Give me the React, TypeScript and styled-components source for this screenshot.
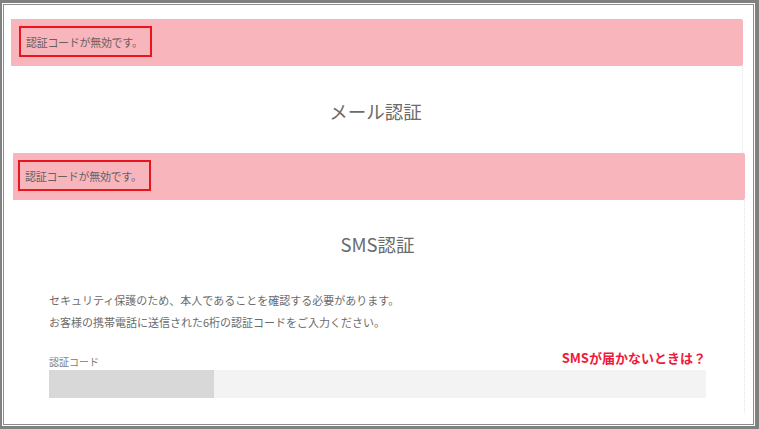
import React from "react";
import styled, { createGlobalStyle } from "styled-components";

const Global = createGlobalStyle`
  html, body { margin: 0; padding: 0; background: #ffffff; }
  body { font-family: "Noto Sans CJK JP", "Noto Sans", sans-serif; }
  * { box-sizing: border-box; }
`;

const Frame = styled.div`
  width: 759px;
  height: 429px;
  background: #ffffff;
  border-style: solid;
  border-color: #808080;
  border-width: 3px 4px 3px 2px;
  padding: 1px;
`;

const Inner = styled.div`
  height: 100%;
  border: 1px solid #8c8c8c;
  overflow: hidden;
  display: flex;
  flex-direction: column;
`;

const Section = styled.section<{ $left: number; $top: number }>`
  width: 732px;
  margin-left: ${(p) => p.$left}px;
  margin-top: ${(p) => p.$top}px;
  display: flex;
  flex-direction: column;
`;

const Banner = styled.div<{ $inset: number }>`
  height: 47px;
  background: #f8b6bc;
  border-radius: 0 2px 2px 0;
  padding: 7px 0 9px ${(p) => p.$inset}px;
  display: flex;
  align-items: stretch;
`;

const Marked = styled.div`
  width: 133px;
  border: 2px solid #e8141e;
  padding-left: 5px;
  display: flex;
  align-items: center;
  font-size: 11px;
  letter-spacing: -0.3px;
  color: #6a5f61;
  white-space: nowrap;
`;

const Panel = styled.div<{ $height: number; $padTop: number }>`
  height: ${(p) => p.$height}px;
  padding: ${(p) => p.$padTop}px 38px 0 36px;
  border-right: 1px dotted #e4e4e4;
  display: flex;
  flex-direction: column;
`;

const Title = styled.h2`
  margin: 0;
  text-align: center;
  font-size: 18.5px;
  line-height: 24px;
  font-weight: 400;
  color: #6b6b6b;
`;

const Lead = styled.p`
  margin: 33px 0 0;
  font-size: 11px;
  line-height: 22px;
  color: #6b6b6b;
  white-space: nowrap;
`;

const FieldHead = styled.div`
  margin-top: 16px;
  display: flex;
  justify-content: space-between;
  align-items: flex-end;
`;

const Label = styled.label`
  font-size: 10px;
  line-height: 14px;
  color: #7a7a7a;
`;

const HelpLink = styled.a`
  margin-bottom: 2px;
  font-size: 13px;
  line-height: 18px;
  font-weight: 700;
  color: #f0193a;
  text-decoration: none;
`;

const CodeInput = styled.div`
  margin-top: 1px;
  height: 28px;
  background: #f3f3f3;
  display: flex;
`;

const Filled = styled.div`
  width: 165px;
  background: #d8d8d8;
`;

export default function App() {
  return (
    <>
      <Global />
      <Frame>
        <Inner>
          <Section $left={7} $top={14}>
            <Banner $inset={8}>
              <Marked>認証コードが無効です。</Marked>
            </Banner>
            <Panel $height={87} $padTop={33}>
              <Title>メール認証</Title>
            </Panel>
          </Section>
          <Section $left={9} $top={0}>
            <Banner $inset={5}>
              <Marked>認証コードが無効です。</Marked>
            </Banner>
            <Panel $height={213} $padTop={32}>
              <Title>SMS認証</Title>
              <Lead>
                セキュリティ保護のため、本人であることを確認する必要があります。
                <br />
                お客様の携帯電話に送信された6桁の認証コードをご入力ください。
              </Lead>
              <FieldHead>
                <Label>認証コード</Label>
                <HelpLink href="#">SMSが届かないときは？</HelpLink>
              </FieldHead>
              <CodeInput>
                <Filled />
              </CodeInput>
            </Panel>
          </Section>
        </Inner>
      </Frame>
    </>
  );
}
